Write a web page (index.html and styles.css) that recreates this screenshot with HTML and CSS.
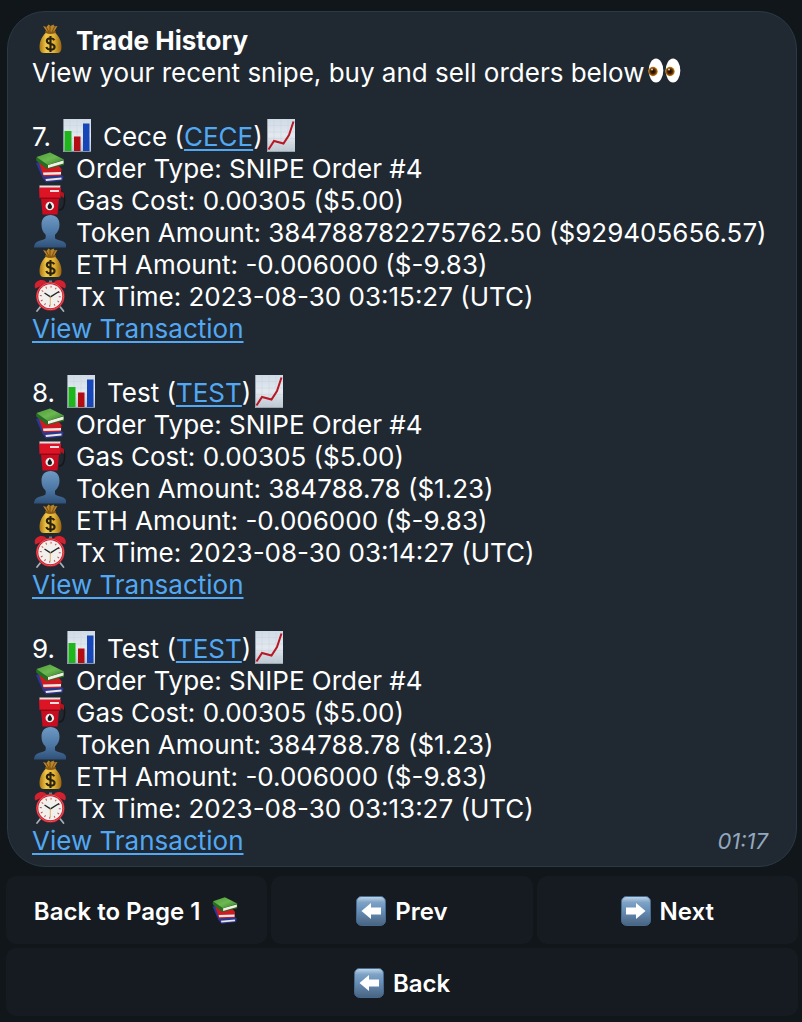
FILE: index.html
```
<!DOCTYPE html>
<html lang="en">
<head>
    <meta charset="utf-8">
    <meta name="viewport" content="width=device-width, initial-scale=1">
    <title>Trade History</title>
    <link rel="stylesheet" href="styles.css">
</head>
<body>
    <!-- Icon sprite -->
    <svg class="sprite" width="0" height="0" aria-hidden="true">
        <defs>
            <linearGradient id="gold" x1="0" y1="0" x2="1" y2="0">
                <stop offset="0" stop-color="#a87717"/>
                <stop offset=".3" stop-color="#efc746"/>
                <stop offset=".65" stop-color="#e2b436"/>
                <stop offset="1" stop-color="#99650f"/>
            </linearGradient>
            <linearGradient id="paper" x1="0" y1="0" x2="0" y2="1">
                <stop offset="0" stop-color="#cfdbe6"/>
                <stop offset=".5" stop-color="#e3e9ef"/>
                <stop offset="1" stop-color="#bcc6d0"/>
            </linearGradient>
            <linearGradient id="green" x1="0" y1="0" x2="1" y2="1">
                <stop offset="0" stop-color="#4d9a3b"/>
                <stop offset=".5" stop-color="#6cb951"/>
                <stop offset="1" stop-color="#367a2a"/>
            </linearGradient>
            <linearGradient id="person" x1="0" y1="0" x2="0" y2="1">
                <stop offset="0" stop-color="#6f9ac5"/>
                <stop offset=".6" stop-color="#4a74a1"/>
                <stop offset="1" stop-color="#2f5178"/>
            </linearGradient>
            <linearGradient id="key" x1="0" y1="0" x2="0" y2="1">
                <stop offset="0" stop-color="#c3d8ea"/>
                <stop offset=".2" stop-color="#7fa3c6"/>
                <stop offset=".5" stop-color="#668db5"/>
                <stop offset="1" stop-color="#49637f"/>
            </linearGradient>
            <radialGradient id="iris">
                <stop offset="0" stop-color="#1c0803"/>
                <stop offset=".5" stop-color="#4a2106"/>
                <stop offset="1" stop-color="#c98a1b"/>
            </radialGradient>
        </defs>

        <symbol id="money" viewBox="0 0 34 34">
            <path d="M11 3l3.500 1 2-2.500 2 1.500 3-1.500 1 2 3-.500-3.500 6h-7z" fill="#b98428"/>
            <path d="M14 4l3 5M18 3v6M22.500 4L20 9" stroke="#7a4d0d" stroke-width="1" fill="none"/>
            <path d="M14.500 9h8c4 3.500 7 9 7 15 0 4-1.500 6-4 6H11.500c-2.500 0-4-2-4-6 0-6 3-11.500 7-15z" fill="url(#gold)"/>
            <path d="M14 9c3 1.300 6 1.300 9 0" stroke="#8b5817" stroke-width="2" fill="none" stroke-linecap="round"/>
            <path d="M22.300 17.300c-.7-1.400-2-2-3.800-2-2.200 0-3.700 1-3.700 2.800 0 4 7.800 1.700 7.800 5.600 0 1.900-1.700 2.900-4 2.900-2.200 0-3.700-.9-4.300-2.600M18.500 13v16" stroke="#29210f" stroke-width="2.100" fill="none"/>
        </symbol>

        <symbol id="books" viewBox="-1 0 34 34">
            <path d="M9 23.500l17-1.500 4.500 3.500-1 4L13 31.500 9 26z" fill="#2b378f"/>
            <path d="M12.500 28l16-1.500v2l-15.500 1.500z" fill="#e8e5e4"/>
            <path d="M3 12l4-1 5.500 13-4 .5z" fill="#26399b"/>
            <path d="M6 12l20 3 2.500 3-.5 6.500-17.500 1z" fill="#cf1a20"/>
            <path d="M10 21.500l18-.500v2.500l-17.500.5z" fill="#eee9e8"/>
            <path d="M3.500 6.500c-.8 2-.4 3.200 1 4.200L14 18l17-4V8.500z" fill="#286b22"/>
            <path d="M15 14l15.500-4.500V12.500L15 17z" fill="#f0f0e9"/>
            <path d="M3.500 6L17 1.500 31 8.500 15 14z" fill="url(#green)"/>
        </symbol>

        <symbol id="gas" viewBox="-1 0 34 34">
            <path d="M28 8l2.500 3c1 3 1.500 7 .5 11-.7 3-2.500 5-5 5" stroke="#15171b" stroke-width="1.600" fill="none"/>
            <path d="M27.500 8l3.500 2v5l-3-2z" fill="#b3151e"/>
            <path d="M6.500 2.500h21l-.5 2.500H6.500z" fill="#e6e1e0"/>
            <path d="M6 4.500h22L27.500 15h-21z" fill="#dc1426"/>
            <rect x="17" y="7" width="9" height="2" fill="#f5dedf"/>
            <path d="M8 15h18l-1.500 16.500h-15z" fill="#c90d21"/>
            <path d="M7 15.200h20" stroke="#870813" stroke-width="1.200"/>
            <circle cx="16.800" cy="23" r="4.300" fill="#f3eeee"/>
            <path d="M16.800 19.500c1 1.800 2.200 3 2.200 4.300a2.200 2.200 0 0 1-4.400 0c0-1.300 1.200-2.500 2.200-4.300z" fill="#17191c"/>
        </symbol>

        <symbol id="user" viewBox="-1 0 34 34">
            <path d="M17.500 0c5.500 0 9 3.700 9 9.500 0 4.500-1.700 8-4.500 10.200v2.800c0 1 .8 1.500 2 1.900l5 1.600c3 1 4.500 3 4.700 6.500H1c.2-3.500 1.700-5.500 4.700-6.500l5-1.600c1.200-.4 2-.9 2-1.900v-2.800C10 17.500 8.500 14 8.500 9.500 8.500 3.700 12 0 17.500 0z" fill="url(#person)"/>
        </symbol>

        <symbol id="clock" viewBox="-1 0 34 34">
            <path d="M8 27l-4 5M26.500 27l4 5" stroke="#aaaeb3" stroke-width="1.800" stroke-linecap="round"/>
            <path d="M16 1.500h3v4h-3z" fill="#777b80"/>
            <path d="M2.500 9.500C.500 6 2.500 2.500 6 1.500s6.500 0 8 2.500zM32 9.500c2-3.500 0-7-3.500-8s-6.500 0-8 2.500z" fill="#d3212f"/>
            <circle cx="17.300" cy="17.300" r="14.300" fill="#c51a29"/>
            <circle cx="17.300" cy="17.300" r="13.400" fill="none" stroke="#e75a60" stroke-width="1"/>
            <circle cx="17.300" cy="17.300" r="12" fill="#f2f0ed"/>
            <circle cx="17.300" cy="17.300" r="9.500" fill="none" stroke="#bb5556" stroke-width="2" stroke-dasharray="1 3.974"/>
            <path d="M11.500 14l6 3.800 8.500-5.300" stroke="#22252a" stroke-width="1.400" fill="none"/>
            <path d="M17.300 17v9.500" stroke="#d5a14b" stroke-width=".8"/>
        </symbol>

        <symbol id="bars" viewBox="0 0 28 34">
            <rect width="28" height="33" fill="url(#paper)"/>
            <path d="M0 6.500h28M0 13h28M0 19.500h28M0 26h28M7 0v33M14 0v33M21 0v33" stroke="#ccd6e0" stroke-width=".6"/>
            <rect x="1.500" y="12" width="7" height="20.500" fill="#20b51c"/>
            <rect x="11" y="17.500" width="6.500" height="15" fill="#b40c13"/>
            <rect x="20" y="4.500" width="6.500" height="28" fill="#1646b8"/>
            <path d="M.5 0v32.500H28" stroke="#8795a4" fill="none"/>
        </symbol>

        <symbol id="trend" viewBox="0 0 28 34">
            <rect width="28" height="33" fill="url(#paper)"/>
            <path d="M0 6.500h28M0 13h28M0 19.500h28M0 26h28M7 0v33M14 0v33M21 0v33" stroke="#cad3dc" stroke-width=".5"/>
            <path d="M.5 0v32.500H28" stroke="#98a4b0" fill="none"/>
            <path d="M1.500 30.500l5.500-8.500 9.500 2.500 5.500-8.500L26.500 2.500" stroke="#b81724" stroke-width="2" fill="none"/>
        </symbol>

        <symbol id="eyes" viewBox="0 0 34 34">
            <ellipse cx="8" cy="15.500" rx="7.300" ry="12" fill="#fff"/>
            <ellipse cx="25" cy="15.500" rx="7.300" ry="12" fill="#fff"/>
            <circle cx="5" cy="16.500" r="4.700" fill="url(#iris)"/>
            <circle cx="22" cy="16.500" r="4.700" fill="url(#iris)"/>
            <circle cx="4" cy="14.500" r="1" fill="#d8c8bb"/>
            <circle cx="21" cy="14.500" r="1" fill="#d8c8bb"/>
        </symbol>

        <symbol id="left" viewBox="0 0 30 30">
            <rect x=".5" y=".5" width="29" height="29" rx="5" fill="url(#key)" stroke="#456b90"/>
            <path d="M5.500 15L15 7v4.500h10v7H15V23z" fill="#fff"/>
        </symbol>

        <symbol id="right" viewBox="0 0 30 30">
            <rect x=".5" y=".5" width="29" height="29" rx="5" fill="url(#key)" stroke="#456b90"/>
            <path d="M24.500 15L15 7v4.500H5v7h10V23z" fill="#fff"/>
        </symbol>
    </svg>

    <main class="chat">
        <article class="message">
            <h1 class="line title"><svg class="icon"><use href="#money"/></svg>Trade History</h1>
            <p class="line intro">View your recent snipe, buy and sell orders below <svg class="icon"><use href="#eyes"/></svg></p>

            <section class="order">
                <h2 class="line order-title">7. <svg class="icon chart"><use href="#bars"/></svg> <span>Cece (<a href="#cece">CECE</a>)</span><svg class="icon chart trend"><use href="#trend"/></svg></h2>
                <ul>
                    <li class="line"><svg class="icon"><use href="#books"/></svg>Order Type: SNIPE Order #4</li>
                    <li class="line"><svg class="icon"><use href="#gas"/></svg>Gas Cost: 0.00305 ($5.00)</li>
                    <li class="line"><svg class="icon"><use href="#user"/></svg>Token Amount: 384788782275762.50 ($929405656.57)</li>
                    <li class="line"><svg class="icon"><use href="#money"/></svg>ETH Amount: -0.006000 ($-9.83)</li>
                    <li class="line"><svg class="icon"><use href="#clock"/></svg>Tx Time: 2023-08-30 03:15:27 (UTC)</li>
                </ul>
                <a href="#tx7">View Transaction</a>
            </section>

            <section class="order">
                <h2 class="line order-title">8. <svg class="icon chart"><use href="#bars"/></svg> <span>Test (<a href="#test">TEST</a>)</span><svg class="icon chart trend"><use href="#trend"/></svg></h2>
                <ul>
                    <li class="line"><svg class="icon"><use href="#books"/></svg>Order Type: SNIPE Order #4</li>
                    <li class="line"><svg class="icon"><use href="#gas"/></svg>Gas Cost: 0.00305 ($5.00)</li>
                    <li class="line"><svg class="icon"><use href="#user"/></svg>Token Amount: 384788.78 ($1.23)</li>
                    <li class="line"><svg class="icon"><use href="#money"/></svg>ETH Amount: -0.006000 ($-9.83)</li>
                    <li class="line"><svg class="icon"><use href="#clock"/></svg>Tx Time: 2023-08-30 03:14:27 (UTC)</li>
                </ul>
                <a href="#tx8">View Transaction</a>
            </section>

            <section class="order">
                <h2 class="line order-title">9. <svg class="icon chart"><use href="#bars"/></svg> <span>Test (<a href="#test">TEST</a>)</span><svg class="icon chart trend"><use href="#trend"/></svg></h2>
                <ul>
                    <li class="line"><svg class="icon"><use href="#books"/></svg>Order Type: SNIPE Order #4</li>
                    <li class="line"><svg class="icon"><use href="#gas"/></svg>Gas Cost: 0.00305 ($5.00)</li>
                    <li class="line"><svg class="icon"><use href="#user"/></svg>Token Amount: 384788.78 ($1.23)</li>
                    <li class="line"><svg class="icon"><use href="#money"/></svg>ETH Amount: -0.006000 ($-9.83)</li>
                    <li class="line"><svg class="icon"><use href="#clock"/></svg>Tx Time: 2023-08-30 03:13:27 (UTC)</li>
                </ul>
                <div class="last-line">
                    <a href="#tx9">View Transaction</a>
                    <time datetime="01:17">01:17</time>
                </div>
            </section>
        </article>

        <div class="keyboard">
            <button class="btn" type="button">Back to Page 1 <svg class="btn-icon"><use href="#books"/></svg></button>
            <button class="btn" type="button"><svg class="btn-icon"><use href="#left"/></svg>Prev</button>
            <button class="btn" type="button"><svg class="btn-icon"><use href="#right"/></svg>Next</button>
            <button class="btn btn-wide" type="button"><svg class="btn-icon"><use href="#left"/></svg>Back</button>
        </div>
    </main>
</body>
</html>
```
FILE: styles.css
```
* {
    margin: 0;
    padding: 0;
    box-sizing: border-box;
}

body {
    font-family: Inter, "Liberation Sans", sans-serif;
    font-size: 26px;
    line-height: 32px;
    background: #10161a;
    color: #fff;
}

.sprite {
    position: absolute;
}

.chat {
    padding: 11px 4px 6px 6px;
}

.message {
    margin: 0 1px;
    padding: 13px 24px 9px;
    background: #202932;
    border: 1px solid #2a3946;
    border-radius: 38px;
}

.line {
    display: flex;
    align-items: flex-start;
    gap: 10px;
    font-size: 26px;
    font-weight: 400;
}

.title {
    font-weight: 700;
}

.intro {
    gap: 4px;
}

.icon {
    flex: none;
    width: 34px;
    height: 34px;
    margin-top: -2px;
    margin-bottom: -2px;
}

.chart {
    width: 28px;
}

.order {
    margin-top: 32px;
}

.order-title {
    gap: 12px;
}

.trend {
    margin-left: -8px;
}

ul {
    list-style: none;
}

a {
    color: #52a8f2;
    text-decoration: underline;
    text-decoration-thickness: 2px;
    text-underline-offset: 3px;
}

.last-line {
    display: flex;
    justify-content: space-between;
}

time {
    padding-right: 4px;
    font-size: 22px;
    font-style: italic;
    color: #93a8be;
}

.keyboard {
    display: grid;
    grid-template-columns: repeat(3, 1fr);
    gap: 4px;
    margin-top: 9px;
}

.btn {
    display: flex;
    align-items: center;
    justify-content: center;
    gap: 9px;
    height: 68px;
    padding-top: 2px;
    border: none;
    border-radius: 10px;
    background: #161b21;
    color: #fff;
    font-family: inherit;
    font-size: 24px;
    font-weight: 600;
    cursor: pointer;
}

.btn:hover {
    background: #1d242c;
}

.btn-wide {
    grid-column: 1 / -1;
}

.btn-icon {
    width: 30px;
    height: 30px;
}
```
